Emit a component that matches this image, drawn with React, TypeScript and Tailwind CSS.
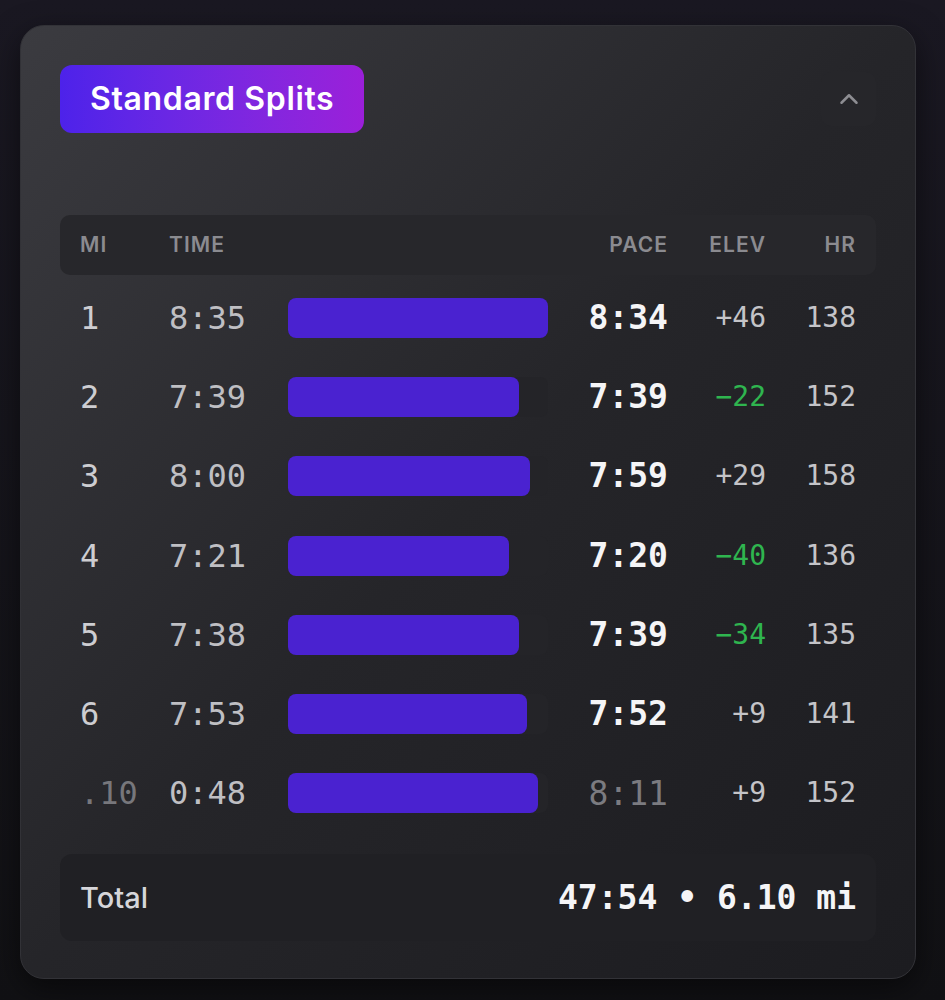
import { ChevronUp } from "lucide-react";

type Split = {
  mi: string;
  time: string;
  pace: string;
  elev: string;
  hr: string;
  pct: number;
  partial?: boolean;
};

const splits: Split[] = [
  { mi: "1", time: "8:35", pace: "8:34", elev: "+46", hr: "138", pct: 100 },
  { mi: "2", time: "7:39", pace: "7:39", elev: "−22", hr: "152", pct: 89 },
  { mi: "3", time: "8:00", pace: "7:59", elev: "+29", hr: "158", pct: 93 },
  { mi: "4", time: "7:21", pace: "7:20", elev: "−40", hr: "136", pct: 85 },
  { mi: "5", time: "7:38", pace: "7:39", elev: "−34", hr: "135", pct: 89 },
  { mi: "6", time: "7:53", pace: "7:52", elev: "+9", hr: "141", pct: 92 },
  { mi: ".10", time: "0:48", pace: "8:11", elev: "+9", hr: "152", pct: 96, partial: true },
];

const mono = "font-['DejaVu_Sans_Mono','Liberation_Mono',monospace]";
const cols = "grid grid-cols-[89px_119px_260px_120px_98px_90px] items-center px-5";

export default function App() {
  return (
    <div className="min-h-screen bg-gradient-to-b from-[#1a1822] to-[#111114] pl-5 pr-[29px] pt-[25px] pb-[22px] font-['Inter','Noto_Sans',sans-serif]">
      <div className="rounded-[24px] border border-[#323237] bg-gradient-to-br from-[#3b3b40] via-[#252529] to-[#1c1c20] px-[39px] pt-[39px] pb-[37px] shadow-[0_10px_30px_rgba(0,0,0,0.5)]">
        {/* header */}
        <div className="flex items-center justify-between">
          <div className="rounded-xl bg-gradient-to-r from-[#4d22ea] to-[#9b1fd9] px-[30px] py-[14px] text-[32px] font-semibold leading-[40px] tracking-[0.02em] text-white">
            Standard Splits
          </div>
          <button className="flex h-[54px] w-[55px] items-center justify-center rounded-[10px] bg-[#26262a]">
            <ChevronUp size={30} strokeWidth={2} color="#8d8d92" />
          </button>
        </div>

        {/* column labels */}
        <div className={`${cols} mt-[82px] h-[60px] rounded-[10px] bg-[#27272b] text-[21px] font-semibold tracking-wider text-[#8b8b90]`}>
          <span>MI</span>
          <span>TIME</span>
          <span />
          <span className="text-right">PACE</span>
          <span className="text-right">ELEV</span>
          <span className="text-right">HR</span>
        </div>

        {/* rows */}
        <div className="mt-[3px]">
          {splits.map((s) => (
            <div key={s.mi} className={`${cols} h-[79.3px] ${mono}`}>
              <span className={`text-[32px] ${s.partial ? "text-[#77777c]" : "text-[#cdcdd1]"}`}>{s.mi}</span>
              <span className="text-[32px] text-[#bfbfc3]">{s.time}</span>
              <div className="h-10 w-[260px] rounded-lg bg-[#242428]">
                <div className="h-10 rounded-lg bg-[#4a22d0]" style={{ width: `${s.pct}%` }} />
              </div>
              <span
                className={`text-right text-[33px] ${s.partial ? "text-[#7b7b80]" : "font-bold text-[#f5f5f7]"}`}
              >
                {s.pace}
              </span>
              <span
                className={`text-right text-[28px] ${s.elev.startsWith("−") ? "text-[#2fb54f]" : "text-[#c4c4c8]"}`}
              >
                {s.elev}
              </span>
              <span className="text-right text-[28px] text-[#c4c4c8]">{s.hr}</span>
            </div>
          ))}
        </div>

        {/* total */}
        <div className="mt-[21px] flex h-[87px] items-center justify-between rounded-xl bg-[#202024] px-5">
          <span className="text-[29px] font-medium text-[#d6d6da]">Total</span>
          <span className={`${mono} text-[33px] font-bold text-[#f5f5f7]`}>47:54 • 6.10 mi</span>
        </div>
      </div>
    </div>
  );
}
